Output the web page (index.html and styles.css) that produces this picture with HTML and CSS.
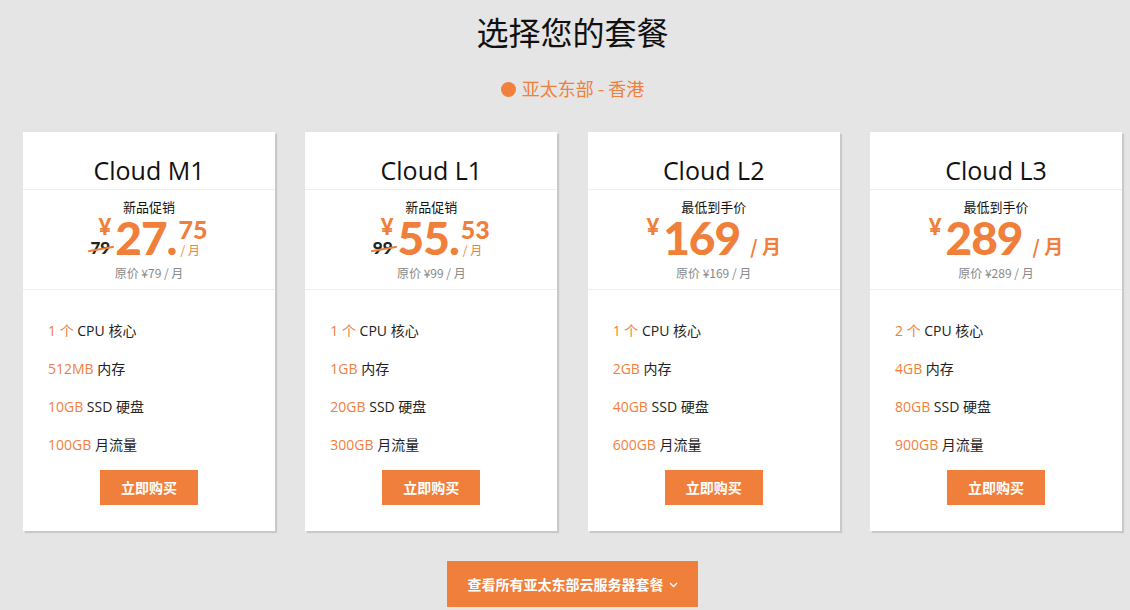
FILE: index.html
```html
<!DOCTYPE html>
<html lang="zh-CN">
<head>
    <meta charset="UTF-8">
    <meta name="viewport" content="width=device-width, initial-scale=1.0">
    <title>选择您的套餐</title>
    <link rel="stylesheet" href="styles.css">
</head>
<body>
    <div class="wrap">
        <h1 class="page-title">选择您的套餐</h1>
        <p class="region"><span class="dot"></span>亚太东部 - 香港</p>

        <div class="plans">
            <div class="plan">
                <h2 class="plan-name">Cloud M1</h2>
                <div class="plan-price">
                    <div class="tag">新品促销</div>
                    <div class="price">
                        <span class="lead"><span class="yen">¥</span><span class="old">79</span></span>
                        <span class="num">27.</span>
                        <span class="frac"><b>75</b><i>/ 月</i></span>
                    </div>
                    <div class="orig">原价 ¥79 / 月</div>
                </div>
                <ul class="specs">
                    <li><em>1 个</em> CPU 核心</li>
                    <li><em>512MB</em> 内存</li>
                    <li><em>10GB</em> SSD 硬盘</li>
                    <li><em>100GB</em> 月流量</li>
                </ul>
                <a class="buy" href="#">立即购买</a>
            </div>

            <div class="plan">
                <h2 class="plan-name">Cloud L1</h2>
                <div class="plan-price">
                    <div class="tag">新品促销</div>
                    <div class="price">
                        <span class="lead"><span class="yen">¥</span><span class="old">99</span></span>
                        <span class="num">55.</span>
                        <span class="frac"><b>53</b><i>/ 月</i></span>
                    </div>
                    <div class="orig">原价 ¥99 / 月</div>
                </div>
                <ul class="specs">
                    <li><em>1 个</em> CPU 核心</li>
                    <li><em>1GB</em> 内存</li>
                    <li><em>20GB</em> SSD 硬盘</li>
                    <li><em>300GB</em> 月流量</li>
                </ul>
                <a class="buy" href="#">立即购买</a>
            </div>

            <div class="plan">
                <h2 class="plan-name">Cloud L2</h2>
                <div class="plan-price">
                    <div class="tag">最低到手价</div>
                    <div class="price">
                        <span class="lead"><span class="yen">¥</span></span>
                        <span class="num">169</span>
                        <span class="per">/ 月</span>
                    </div>
                    <div class="orig">原价 ¥169 / 月</div>
                </div>
                <ul class="specs">
                    <li><em>1 个</em> CPU 核心</li>
                    <li><em>2GB</em> 内存</li>
                    <li><em>40GB</em> SSD 硬盘</li>
                    <li><em>600GB</em> 月流量</li>
                </ul>
                <a class="buy" href="#">立即购买</a>
            </div>

            <div class="plan">
                <h2 class="plan-name">Cloud L3</h2>
                <div class="plan-price">
                    <div class="tag">最低到手价</div>
                    <div class="price">
                        <span class="lead"><span class="yen">¥</span></span>
                        <span class="num">289</span>
                        <span class="per">/ 月</span>
                    </div>
                    <div class="orig">原价 ¥289 / 月</div>
                </div>
                <ul class="specs">
                    <li><em>2 个</em> CPU 核心</li>
                    <li><em>4GB</em> 内存</li>
                    <li><em>80GB</em> SSD 硬盘</li>
                    <li><em>900GB</em> 月流量</li>
                </ul>
                <a class="buy" href="#">立即购买</a>
            </div>
        </div>

        <div class="more-row">
            <a class="more" href="#">查看所有亚太东部云服务器套餐
                <svg class="chev" width="9" height="6" viewBox="0 0 9 6"><path d="M1 1l3.5 3.5L8 1" fill="none" stroke="#fff" stroke-width="1.4"/></svg>
            </a>
        </div>
    </div>
</body>
</html>
```

FILE: styles.css
```css
body {
    margin: 0;
    background: #e5e5e5;
    font-family: "Open Sans", "Noto Sans CJK SC", sans-serif;
    color: #222;
}
.wrap {
    width: 1099px;
    margin-left: 23px;
}
.page-title {
    margin: 0;
    padding-top: 9px;
    text-align: center;
    font-family: "Noto Sans CJK SC", sans-serif;
    font-weight: 400;
    font-size: 32px;
    line-height: 44px;
    color: #111;
}
.region {
    margin: 22px 0 0;
    text-align: center;
    font-family: "Noto Sans CJK SC", sans-serif;
    font-size: 18px;
    line-height: 26px;
    color: #f0803c;
}
.dot {
    display: inline-block;
    width: 15px;
    height: 15px;
    border-radius: 50%;
    background: #f0803c;
    margin-right: 6px;
    vertical-align: -1px;
}
.plans {
    display: flex;
    justify-content: space-between;
    margin-top: 31px;
}
.plan {
    width: 252px;
    background: #fff;
    box-shadow: 2px 2px 1px #c9c9c9;
    text-align: center;
    padding-bottom: 26px;
}
.plan-name {
    margin: 0;
    padding: 23px 0 4px;
    font-weight: 400;
    font-size: 25px;
    line-height: 30px;
    color: #111;
    border-bottom: 1px solid #eee;
}
.plan-price {
    padding: 8px 0 7px;
    border-bottom: 1px solid #eee;
}
.tag {
    font-family: "Noto Sans CJK SC", sans-serif;
    font-size: 13px;
    line-height: 18px;
    color: #111;
}
.price {
    display: flex;
    justify-content: center;
    align-items: flex-end;
    height: 40px;
    margin-top: 2px;
    color: #ef7f3a;
    font-family: "Lato", "Open Sans", sans-serif;
    font-weight: 900;
}
.lead {
    display: flex;
    flex-direction: column;
    align-items: flex-end;
    justify-content: space-between;
    align-self: stretch;
    margin-right: 4px;
}
.yen {
    font-size: 22px;
    line-height: 18px;
}
.old {
    position: relative;
    font-size: 17px;
    line-height: 17px;
    color: #222;
    margin-bottom: 2px;
    margin-right: 1px;
}
.old::after {
    content: "";
    position: absolute;
    left: -2px;
    right: -4px;
    top: 9px;
    border-top: 2px solid #ef7f3a;
    transform: rotate(-10deg);
}
.num {
    font-size: 46px;
    line-height: 40px;
    letter-spacing: -1px;
}
.frac {
    display: flex;
    flex-direction: column;
    align-items: flex-start;
    align-self: stretch;
    margin-left: 2px;
}
.frac b {
    font-size: 25px;
    line-height: 22px;
}
.frac i {
    font-style: normal;
    font-weight: 400;
    font-family: "Noto Sans CJK SC", sans-serif;
    font-size: 12px;
    line-height: 16px;
    margin: 2px 0 0 2px;
}
.per {
    font-family: "Noto Sans CJK SC", sans-serif;
    font-weight: 700;
    font-size: 19px;
    line-height: 24px;
    margin-left: 10px;
}
.orig {
    margin-top: 6px;
    font-family: "Noto Sans CJK SC", sans-serif;
    font-size: 12px;
    line-height: 18px;
    color: #888;
}
.specs {
    list-style: none;
    margin: 0;
    padding: 22px 25px 0;
    text-align: left;
    font-family: "Open Sans", "Noto Sans CJK SC", sans-serif;
    font-size: 14px;
    line-height: 38px;
    color: #222;
}
.specs em {
    font-style: normal;
    color: #f0803c;
}
.buy {
    display: block;
    width: 98px;
    height: 35px;
    margin: 6px auto 0;
    background: #ef7f3a;
    color: #fff;
    text-decoration: none;
    font-family: "Noto Sans CJK SC", sans-serif;
    font-weight: 700;
    font-size: 14px;
    line-height: 35px;
}
.more-row {
    text-align: center;
    margin-top: 30px;
}
.more {
    display: inline-block;
    width: 251px;
    height: 46px;
    background: #ef7f3a;
    color: #fff;
    text-decoration: none;
    font-family: "Noto Sans CJK SC", sans-serif;
    font-weight: 700;
    font-size: 14px;
    line-height: 46px;
}
.chev {
    vertical-align: 2px;
    margin-left: 2px;
}
```
